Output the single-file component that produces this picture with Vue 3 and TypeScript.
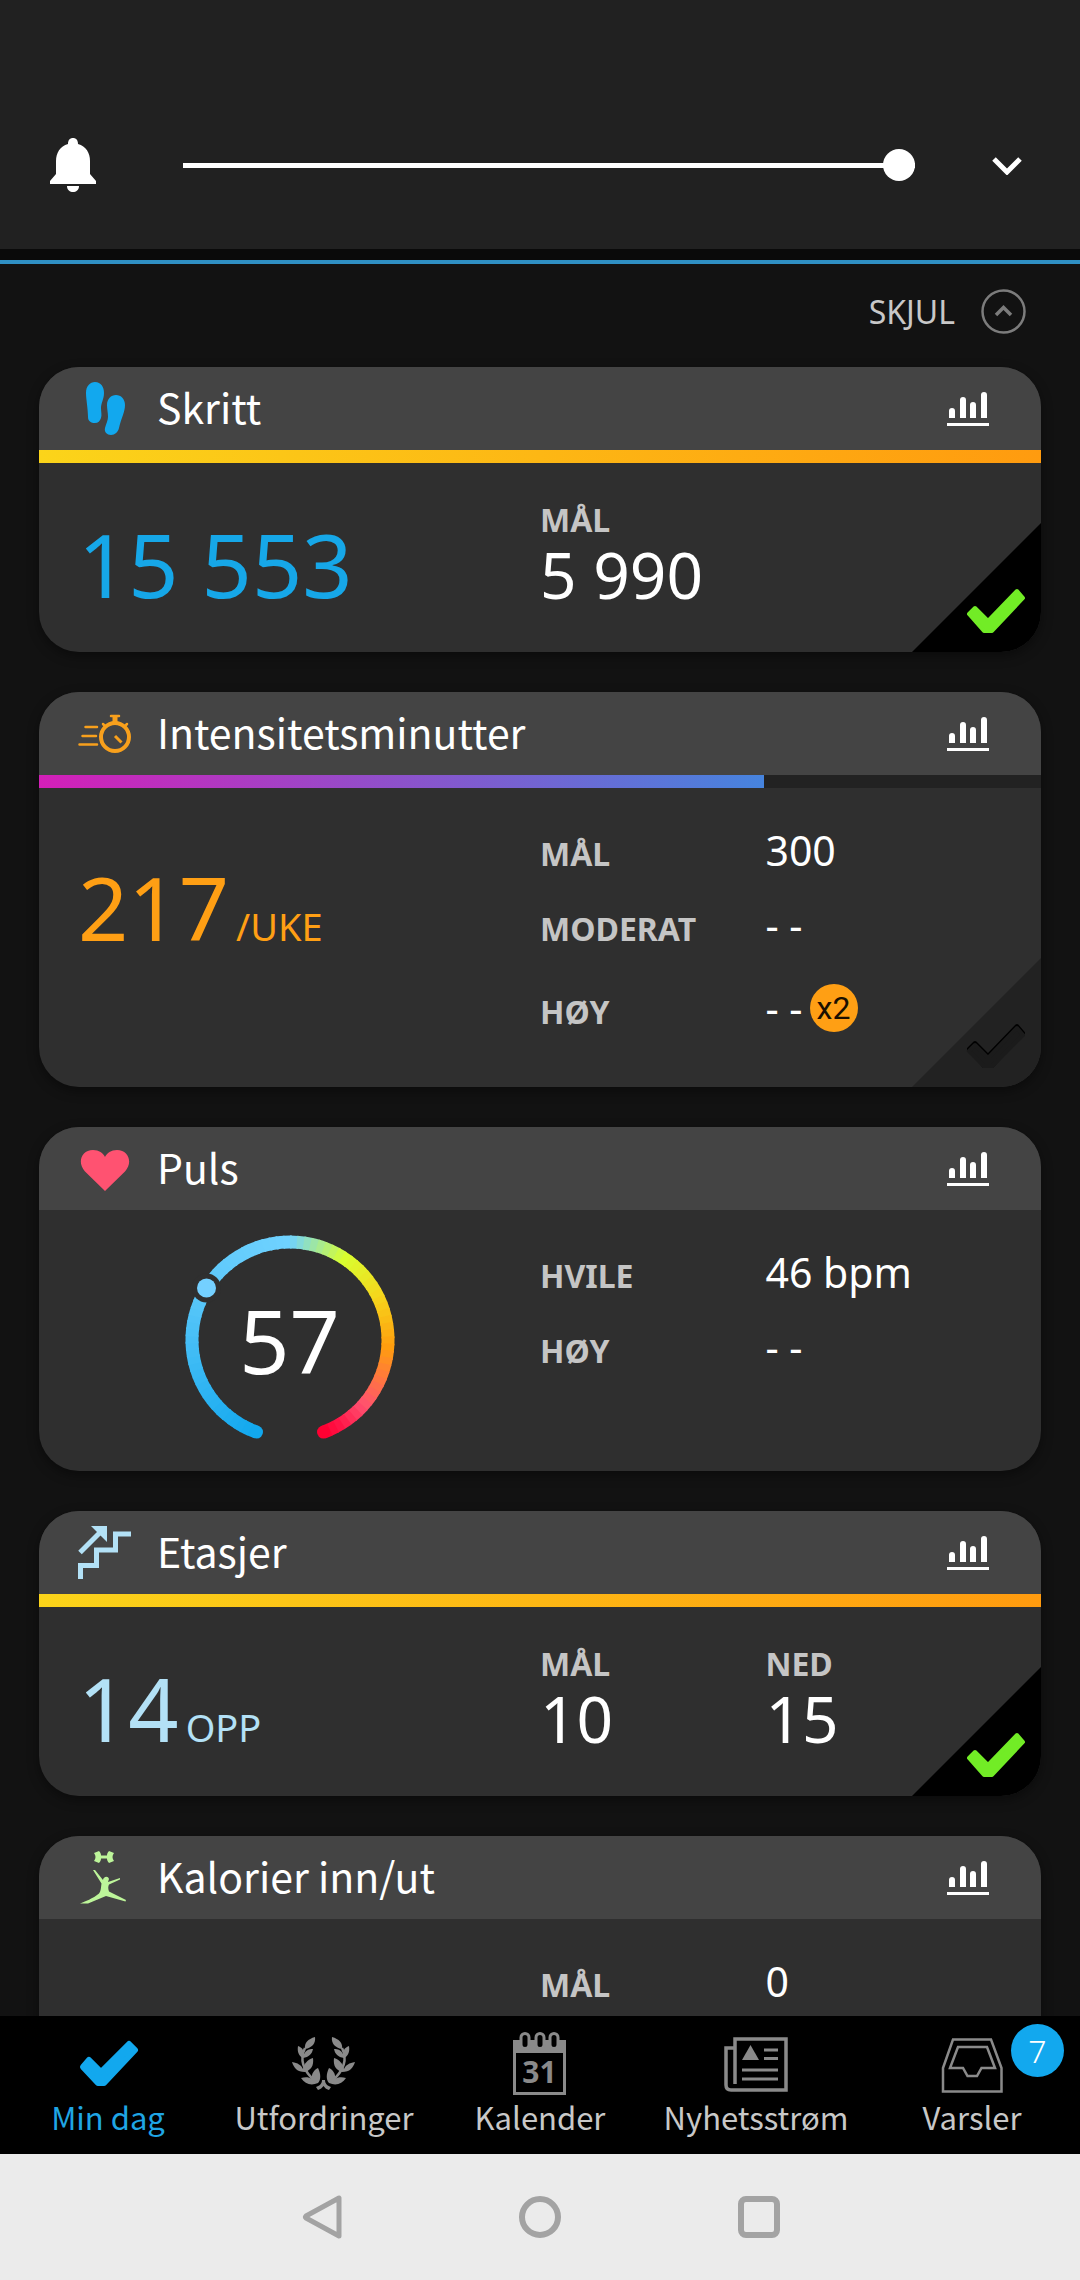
<script setup lang="ts">
import { computed, ref } from 'vue'

type Rgb = [number, number, number]

interface Row {
  label: string
  value: string
  badge?: string
}

interface Card {
  id: string
  title: string
  icon: 'steps' | 'stopwatch' | 'heart' | 'stairs' | 'figure'
  progress?: number
  tone?: 'gold' | 'violet'
  value?: string
  unit?: string
  color?: string
  goal?: 'reached' | 'open'
  stats?: Row[]
  rows?: Row[]
  gauge?: boolean
}

const volume = ref(100)

const cards: Card[] = [
  {
    id: 'steps', title: 'Skritt', icon: 'steps', progress: 100, tone: 'gold',
    value: '15 553', color: '#16a7e8', goal: 'reached',
    stats: [{ label: 'MÅL', value: '5 990' }],
  },
  {
    id: 'intensity', title: 'Intensitetsminutter', icon: 'stopwatch', progress: (217 / 300) * 100, tone: 'violet',
    value: '217', unit: '/UKE', color: '#ff9f14', goal: 'open',
    rows: [
      { label: 'MÅL', value: '300' },
      { label: 'MODERAT', value: '- -' },
      { label: 'HØY', value: '- -', badge: 'x2' },
    ],
  },
  {
    id: 'pulse', title: 'Puls', icon: 'heart', value: '57', color: '#ffffff', gauge: true,
    rows: [
      { label: 'HVILE', value: '46 bpm' },
      { label: 'HØY', value: '- -' },
    ],
  },
  {
    id: 'floors', title: 'Etasjer', icon: 'stairs', progress: 100, tone: 'gold',
    value: '14', unit: 'OPP', color: '#b3e1f6', goal: 'reached',
    stats: [{ label: 'MÅL', value: '10' }, { label: 'NED', value: '15' }],
  },
  {
    id: 'calories', title: 'Kalorier inn/ut', icon: 'figure',
    rows: [{ label: 'MÅL', value: '0' }],
  },
]

const tabs = [
  { id: 'day', label: 'Min dag' },
  { id: 'challenges', label: 'Utfordringer' },
  { id: 'calendar', label: 'Kalender' },
  { id: 'news', label: 'Nyhetsstrøm' },
  { id: 'alerts', label: 'Varsler', count: 7 },
]
const activeTab = ref('day')

// Heart rate dial: colour stops by angle, in degrees clockwise from the top.
const stops: [number, Rgb][] = [
  [-160, [18, 168, 238]],
  [-60, [92, 200, 250]],
  [0, [112, 210, 255]],
  [33, [216, 255, 48]],
  [64, [246, 214, 28]],
  [94, [255, 158, 14]],
  [132, [255, 80, 112]],
  [150, [255, 20, 70]],
  [160, [255, 0, 50]],
]

function colorAt(angle: number): string {
  const i = Math.max(1, stops.findIndex(([a]) => a >= angle))
  const [a0, c0] = stops[i - 1]
  const [a1, c1] = stops[i]
  const t = (angle - a0) / (a1 - a0)
  return `rgb(${c0.map((c, k) => Math.round(c + (c1[k] - c) * t)).join(',')})`
}

function point(angle: number, r = 98): string {
  const rad = (angle * Math.PI) / 180
  return `${(105 + r * Math.sin(rad)).toFixed(2)} ${(105 - r * Math.cos(rad)).toFixed(2)}`
}

const segments = computed(() => {
  const step = 4
  return Array.from({ length: 80 }, (_, i) => {
    const from = -160 + i * step
    const to = Math.min(160, from + step + 1)
    return { d: `M${point(from)} A98 98 0 0 1 ${point(to)}`, color: colorAt(from + step / 2) }
  })
})
</script>

<template>
  <div class="screen">
    <section class="volume" aria-label="Volum">
      <svg class="bell" width="48" height="56" viewBox="0 0 48 56" fill="#fff" aria-hidden="true">
        <path d="M24 1c3 0 5 2 5 6 8 2 12 9 12 17v13l6 7v3H1v-3l6-7V24C7 16 11 9 19 7c0-4 2-6 5-6z" />
        <path d="M18 49h12c0 4-3 6-6 6s-6-2-6-6z" />
      </svg>
      <input v-model="volume" class="slider" type="range" min="0" max="100" aria-label="Ringevolum">
      <button class="plain" type="button" aria-label="Utvid">
        <svg width="30" height="20" viewBox="0 0 30 20" fill="none" stroke="#fff" stroke-width="5" aria-hidden="true">
          <path d="M2 4l13 13L28 4" />
        </svg>
      </button>
    </section>
    <div class="divider"></div>

    <main class="feed">
      <div class="hide-row">
        <button class="hide" type="button">
          <span>SKJUL</span>
          <svg width="45" height="45" viewBox="0 0 45 45" fill="none" stroke="#7c7c7c" aria-hidden="true">
            <circle cx="22.5" cy="22.5" r="21" stroke-width="2.5" />
            <path d="M15 26l7.500-7.500L30 26" stroke-width="3.500" />
          </svg>
        </button>
      </div>

      <article v-for="card in cards" :key="card.id" class="card" :class="`card-${card.id}`">
        <header class="card-head">
          <svg class="card-icon" width="53" height="53" viewBox="0 0 53 53" aria-hidden="true">
            <g v-if="card.icon === 'steps'" fill="#12a8ee">
              <path d="M17 0C23 0 26 5 26 11 26 17 23 21 23 26 23 30 24 33 23 36 22 39 20 41 17 41 13 41 10 39 10 35 10 27 8 17 8 11 8 4 12 0 17 0Z" />
              <path d="M38 13C43 13 47 17 47 23 47 30 43 37 41 46 40 50 37 53 33 53 29 53 26 50 27 46 28 42 30 38 30 35 30 31 29 27 29 23 29 17 33 13 38 13Z" />
            </g>
            <g v-else-if="card.icon === 'stopwatch'" fill="none" stroke="#f8a01c" stroke-linecap="round">
              <circle cx="37" cy="30" r="14" stroke-width="4" />
              <path d="M33 9h8M25 17l2 2M49 17l-2 2M7.500 20H19M4.500 29H18M1.500 37.500H19" stroke-width="2.500" />
              <path d="M37 9v6" stroke-width="5" stroke-linecap="butt" />
              <path d="M37 29l6.500 6.500" stroke-width="3" stroke-linecap="butt" />
            </g>
            <path v-else-if="card.icon === 'heart'" fill="#ff5271" d="M27 49L7 29.500C-1 21 3 8 15 8 21 8 25 11 27 15 29 11 33 8 39 8 51 8 55 21 47 29.500Z" />
            <g v-else-if="card.icon === 'stairs'" fill="none" stroke="#b3e1f6" stroke-width="5">
              <path d="M2.500 53V39.500H18.500V24H37.500V8H53M2 26.500L22 6.500" />
              <path d="M13 0h16v16z" fill="#b3e1f6" stroke="none" />
            </g>
            <g v-else fill="#bdf59a">
              <path d="M16 2l5-2c2 2 2 4 2 4.500h6C29 4 29 2 31 0l5 2c-2 3-2 5 0 8l-5 2c-2-2-2-4-2-4.500h-6c0 .5 0 2.500-2 4.500l-5-2c2-3 2-5 0-8z" />
              <path d="M15 19l2 0 8 10c0-3 5-5 6-1l-1 3 12-4v1.500L31 33.500c-1 2-1 4 0 7L48 49l-.5 1.500L28 45 10 52.500H2c5-2 13-5 19-10 2-2 2-7 2.500-10z" />
            </g>
          </svg>
          <h2 class="title">{{ card.title }}</h2>
          <button class="plain" type="button" :aria-label="`Graf for ${card.title}`">
            <svg width="42" height="34" viewBox="0 0 42 34" fill="#fff" aria-hidden="true">
              <path d="M2 26v-7a3 3 0 0 1 6 0v7zM13 26V8a3 3 0 0 1 6 0v18zM23 26V13a3 3 0 0 1 6 0v13zM34 26V3a3 3 0 0 1 6 0v23zM0 31h42v3H0z" />
            </svg>
          </button>
        </header>
        <div v-if="card.tone" class="track">
          <div class="fill" :class="card.tone" :style="{ width: `${card.progress}%` }"></div>
        </div>

        <div class="body">
          <div v-if="card.gauge" class="gauge">
            <svg class="dial" width="210" height="210" viewBox="0 0 210 210" fill="none" aria-hidden="true">
              <path v-for="s in segments" :key="s.d" :d="s.d" :stroke="s.color" stroke-width="13" />
              <circle cx="71.500" cy="197.100" r="6.500" fill="#12a8ee" />
              <circle cx="138.500" cy="197.100" r="6.500" fill="#ff0032" />
              <circle cx="21.500" cy="53" r="14.500" fill="#2f2f2f" />
              <circle cx="21.500" cy="53" r="9.500" fill="#74d0ff" />
            </svg>
            <span class="number">{{ card.value }}</span>
          </div>
          <div v-else class="reading" :style="{ color: card.color }">
            <span class="number">{{ card.value }}</span>
            <span v-if="card.unit" class="unit">{{ card.unit }}</span>
          </div>

          <dl v-if="card.stats" class="stats">
            <div v-for="s in card.stats" :key="s.label" class="stat">
              <dt>{{ s.label }}</dt>
              <dd>{{ s.value }}</dd>
            </div>
          </dl>
          <dl v-else class="rows">
            <div v-for="r in card.rows" :key="r.label" class="row" :class="{ spaced: r.badge }">
              <dt>{{ r.label }}</dt>
              <dd>{{ r.value }}<span v-if="r.badge" class="times">{{ r.badge }}</span></dd>
            </div>
          </dl>
        </div>

        <svg v-if="card.goal" class="corner" width="129" height="129" viewBox="0 0 129 129" aria-hidden="true">
          <path d="M129 0v129H0z" :fill="card.goal === 'reached' ? '#000' : '#222'" />
          <g v-if="card.goal === 'reached'" fill="#72ec26" stroke="#72ec26" stroke-width="4" stroke-linejoin="round">
            <path d="M57 91l6-6 12 12h2l28-29 6 7-31 33h-8z" />
          </g>
          <g v-else stroke-width="4" stroke-linejoin="round">
            <path d="M57 91l6-6 12 12h2l28-29 6 7-31 33h-8z" fill="#000" stroke="#000" />
            <path d="M57 93l6-6 12 12h2l28-29 6 7-31 31h-8z" fill="#1b1b1b" stroke="#1b1b1b" />
          </g>
        </svg>
      </article>
    </main>

    <nav class="tabs" aria-label="Hovedmeny">
      <button
        v-for="tab in tabs" :key="tab.id" class="tab" :class="{ active: tab.id === activeTab }"
        type="button" @click="activeTab = tab.id"
      >
        <svg width="64" height="64" viewBox="0 0 64 64" fill="none" stroke="#8a8a8a" stroke-width="3" aria-hidden="true">
          <path v-if="tab.id === 'day'" d="M7 35l6-7 12 12 28-28 6 6-31 33h-6z" fill="#12a8ee" stroke="#12a8ee" stroke-width="6" stroke-linejoin="round" />
          <g v-else-if="tab.id === 'challenges'" fill="#8a8a8a" stroke="none">
            <g v-for="side in ['', 'matrix(-1 0 0 1 63 0)']" :key="side" :transform="side">
              <path d="M23 5c1 6-3 11-10 12-1-6 3-10 10-12z" />
              <path d="M6 14c5 2 6 5 6 8 2-4 5-5 9-5-1 5-4 8-10 9-4-2-6-6-5-12z" />
              <path d="M0 30c6 1 9 3 11 7 1-5 4-9 10-11 1 8-2 12-8 14C5 40 2 36 0 30z" />
              <path d="M9 46c4-1 8-1 11 1-1-5 2-9 6-11 3 6 3 12 0 15-7 3-13 1-17-5z" />
              <path d="M13 16C8 26 10 38 24 50" fill="none" stroke="#8a8a8a" stroke-width="2.500" />
            </g>
            <path d="M30 48h3c0 4 3 6 6 7l-2 3c-3-1-4-2-5.500-4-1.500 2-3 3-5.500 4l-2-3c3-1 6-3 6-7z" />
          </g>
          <g v-else-if="tab.id === 'calendar'">
            <path d="M5 8h53v55H5zM8 21v39h47V21z" fill="#8a8a8a" fill-rule="evenodd" stroke="none" />
            <rect v-for="x in [13, 28, 42]" :key="x" :x="x" y="1.500" width="8" height="15" rx="4" fill="#000" />
            <text x="31.500" y="51" text-anchor="middle" class="date" fill="#8a8a8a" stroke="none">31</text>
          </g>
          <g v-else-if="tab.id === 'news'">
            <path d="M11 52V7h51v51H7q-5 0-5-5V16h9" stroke-width="3.500" />
            <path d="M40 18h14M40 26.500h14M18 38h36M18 47h36" />
            <path d="M26.500 13L35 28H18z" fill="#8a8a8a" stroke="none" />
          </g>
          <path v-else d="M13 7.500H51L61.500 36V59.500H3V36ZM18 15H47L55 36H41.500L37 44H27.500L23 36H10Z" stroke-width="2.500" />
        </svg>
        <span class="tab-label">{{ tab.label }}</span>
        <span v-if="tab.count" class="count">{{ tab.count }}</span>
      </button>
    </nav>

    <nav class="system" aria-label="Systemnavigasjon">
      <button class="plain" type="button" aria-label="Tilbake">
        <svg width="44" height="46" viewBox="0 0 44 46" fill="none" stroke="#a3a3a3" stroke-width="5" stroke-linejoin="round"><path d="M39 4v38L6 24q-1-1 0-2z" /></svg>
      </button>
      <button class="plain" type="button" aria-label="Hjem">
        <svg width="44" height="46" viewBox="0 0 44 46" fill="none" stroke="#a3a3a3" stroke-width="6"><circle cx="22" cy="23" r="18" /></svg>
      </button>
      <button class="plain" type="button" aria-label="Nylige apper">
        <svg width="44" height="46" viewBox="0 0 44 46" fill="none" stroke="#a3a3a3" stroke-width="6"><rect x="5" y="5" width="36" height="36" rx="5" /></svg>
      </button>
    </nav>
  </div>
</template>

<style>
body {
  margin: 0;
  background: #121212;
}
</style>

<style scoped>
.screen {
  display: flex;
  flex-direction: column;
  height: 100vh;
  overflow: hidden;
  background: #121212;
  color: #fff;
  font-family: "Noto Sans", "Open Sans", sans-serif;
}

button {
  padding: 0;
  border: 0;
  background: none;
  color: inherit;
  font: inherit;
}

svg {
  display: block;
  flex: none;
}

.plain {
  display: block;
}

.volume {
  display: flex;
  align-items: center;
  padding: 133px 58px 52px 49px;
  background: #212121;
}

.bell {
  margin: 4px 86px 4px 0;
}

.slider {
  flex: 1;
  min-width: 0;
  height: 32px;
  margin: 0 77px 0 0;
  appearance: none;
  background: linear-gradient(#fff, #fff) center / 100% 5px no-repeat;
}

.slider::-webkit-slider-thumb {
  appearance: none;
  width: 32px;
  height: 32px;
  border-radius: 50%;
  background: #fff;
}

.divider {
  flex: none;
  height: 11px;
  border-bottom: 4px solid #2f90c4;
  background: #0a0a0a;
}

.feed {
  flex: 1;
  min-height: 0;
  overflow: hidden;
  padding: 0 39px;
}

.hide-row {
  display: flex;
  justify-content: flex-end;
  padding: 25px 15px 33px;
}

.hide {
  display: flex;
  align-items: center;
  gap: 26px;
  color: #c8c8c8;
  font-size: 32px;
  line-height: 45px;
}

.card {
  position: relative;
  margin-bottom: 40px;
  overflow: hidden;
  border-radius: 40px;
  background: #2f2f2f;
  box-shadow: 0 4px 12px rgba(0, 0, 0, 0.4);
}

.card-head {
  display: flex;
  align-items: center;
  gap: 26px;
  padding: 15px 52px 15px 39px;
  background: #444;
}

.title {
  flex: 1;
  margin: 0;
  padding-bottom: 4px;
  font: 400 41px/49px "Noto Sans CJK SC", "Noto Sans", sans-serif;
}

.track {
  height: 13px;
  background: #222;
}

.fill {
  height: 100%;
}

.gold {
  background: linear-gradient(90deg, #fbd41a, #fdb714 50%, #ff9b0f);
}

.violet {
  background: linear-gradient(90deg, #d41fb8, #4684de);
}

.body {
  display: grid;
  grid-template-columns: 1fr 1fr;
}

.reading {
  display: flex;
  align-items: baseline;
  gap: 7px;
  padding: 57px 0 44px 39px;
}

.card-intensity .reading {
  padding-top: 75px;
}

.number {
  font-size: 88px;
  line-height: 88px;
}

.unit {
  font-size: 38px;
  line-height: 44px;
}

.gauge {
  display: grid;
  place-items: center;
  padding: 25px 0 26px;
}

.gauge > * {
  grid-area: 1 / 1;
}

dl,
dd {
  margin: 0;
}

dt {
  color: #c5c5c5;
  font-size: 32px;
  font-weight: 700;
}

.stats {
  display: flex;
  padding-top: 38px;
}

.stat {
  width: 45%;
}

.stat dt {
  line-height: 38px;
}

.stat dd {
  font-size: 64px;
  line-height: 72px;
  white-space: nowrap;
}

.rows {
  display: flex;
  flex-direction: column;
  gap: 15px;
  padding: 32px 0 49px;
}

.row {
  display: flex;
  align-items: baseline;
}

.row.spaced {
  margin-top: 8px;
}

.row dt {
  width: 45%;
  line-height: 40px;
}

.row dd {
  display: flex;
  align-items: center;
  gap: 7px;
  font-size: 41px;
  line-height: 60px;
}

.times {
  width: 48px;
  height: 48px;
  border-radius: 50%;
  background: #ff9f14;
  color: #1a1000;
  font: 400 32px/48px Roboto, sans-serif;
  text-align: center;
}

.corner {
  position: absolute;
  right: 0;
  bottom: 0;
}

.tabs {
  display: grid;
  flex: none;
  grid-template-columns: repeat(5, 1fr);
  background: #000;
}

.tab {
  position: relative;
  display: flex;
  flex-direction: column;
  align-items: center;
  padding: 16px 0 19px;
  color: #c8c8c8;
}

.tab.active {
  color: #1fa5e4;
}

.tab-label {
  margin-top: 3px;
  font: 400 31px/36px "Noto Sans CJK SC", "Noto Sans", sans-serif;
}

.date {
  font: 700 30px "Noto Sans", sans-serif;
}

.count {
  position: absolute;
  top: 8px;
  right: 16px;
  width: 53px;
  height: 53px;
  border-radius: 50%;
  background: #12a8ee;
  color: #fff;
  font-size: 32px;
  font-weight: 300;
  line-height: 53px;
  text-align: center;
}

.system {
  display: flex;
  flex: none;
  justify-content: center;
  gap: 174px;
  padding: 40px 0;
  background: #ebebeb;
}
</style>
